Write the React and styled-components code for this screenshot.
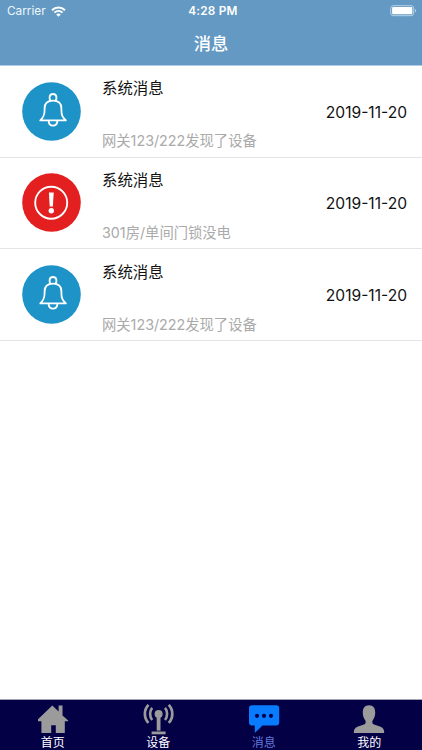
import React, { useState } from "react";
import styled, { createGlobalStyle } from "styled-components";

const GlobalStyle = createGlobalStyle`
  * {
    box-sizing: border-box;
  }
  body {
    margin: 0;
    background: #ffffff;
    font-family: Inter, "Noto Sans CJK SC", sans-serif;
  }
`;

const Screen = styled.div`
  display: flex;
  flex-direction: column;
  height: 100vh;
  overflow: hidden;
`;

const Header = styled.header`
  flex: none;
  height: 66px;
  background: #6399c2;
  border-bottom: 1px solid #aecdea;
  color: #ffffff;
`;

const StatusBar = styled.div`
  display: grid;
  grid-template-columns: 1fr auto 1fr;
  align-items: center;
  height: 22px;
  padding: 0 5px 0 7px;
  font-size: 11.8px;
  line-height: 22px;
`;

const Carrier = styled.div`
  display: flex;
  align-items: center;
  gap: 5px;
  color: #eef6fc;
`;

const Clock = styled.div`
  padding-left: 2px;
  font-weight: 600;
  letter-spacing: 0.2px;
`;

const Battery = styled.svg`
  justify-self: end;
`;

const HeaderTitle = styled.h1`
  margin: 0;
  height: 43px;
  line-height: 43px;
  text-align: center;
  font-size: 17.3px;
  font-weight: 500;
`;

const MessageList = styled.main`
  flex: 1;
  background: #ffffff;
`;

const MessageRow = styled.div`
  display: flex;
  align-items: center;
  height: 91.67px;
  padding: 0 15px 0 22px;
  border-bottom: 1px solid #e4e4e4;
`;

const MessageIcon = styled.svg`
  flex: none;
  width: 59px;
  height: 59px;
  margin-right: 21px;
`;

const MessageBody = styled.div`
  flex: 1;
  display: flex;
  flex-direction: column;
  justify-content: space-between;
  height: 82px;
  padding-top: 8px;
  white-space: nowrap;
`;

const MessageTitle = styled.p`
  margin: 0;
  font-size: 15.4px;
  line-height: 22px;
  color: #111111;
`;

const MessageDescription = styled.p`
  margin: 0;
  font-size: 14.3px;
  line-height: 22px;
  color: #aaaaaa;
`;

const MessageDate = styled.span`
  padding-top: 2px;
  font-size: 15.6px;
  color: #111111;
`;

const TabBar = styled.nav`
  flex: none;
  display: grid;
  grid-template-columns: repeat(4, 1fr);
  height: 51px;
  border-top: 1px solid #a3a3b2;
  background: #040046;
`;

const Tab = styled.button`
  display: flex;
  flex-direction: column;
  align-items: center;
  padding: 4px 0 0;
  border: none;
  background: none;
  font-family: inherit;
  font-size: 12px;
  line-height: 15px;
  color: ${(props) => (props.$active ? "#6478d8" : "#ffffff")};
`;

const TabIcon = styled.svg`
  width: 32px;
  height: 31px;
  color: ${(props) => (props.$active ? "#087bff" : "#9b9b9b")};
`;

const BellIcon = () => (
  <MessageIcon viewBox="0 0 59 59" fill="none" stroke="#ffffff">
    <circle cx="29.5" cy="29.5" r="29.3" fill="#1d93c8" stroke="none" />
    <g strokeWidth="1.8" strokeLinejoin="round" strokeLinecap="round">
      <path d="M28.4 18.4C27 16.6 27 12 31 12C35 12 35 16.6 33.6 18.4" />
      <path d="M18.3 38.4C21.6 35.2 22.6 33.2 22.6 28V26.4C22.6 21.2 26 18.7 31 18.7C36 18.7 39.4 21.2 39.4 26.4V28C39.4 33.2 40.4 35.2 43.9 38.4Z" />
      <path d="M26.6 39.2C27.2 45.2 34.8 45.2 35.4 39.2" />
    </g>
  </MessageIcon>
);

const AlertIcon = () => (
  <MessageIcon viewBox="0 0 59 59">
    <circle cx="29.5" cy="29.5" r="29.3" fill="#e31f1f" />
    <circle
      cx="29.2"
      cy="29.7"
      r="16"
      fill="none"
      stroke="#ffffff"
      strokeWidth="1.9"
    />
    <path d="M26.9 19.5H31.7L30.9 33.6H27.7Z" fill="#ffffff" />
    <circle cx="29.3" cy="37.7" r="2.7" fill="#ffffff" />
  </MessageIcon>
);

const WifiIcon = () => (
  <svg width="15" height="11" viewBox="0 0 15 11" fill="none" stroke="#ffffff">
    <path d="M1 4.2C4.7 0.5 10.3 0.5 14 4.2" strokeWidth="2" />
    <path d="M3.4 6.6C5.8 4.3 9.2 4.3 11.6 6.6" strokeWidth="1.9" />
    <path
      d="M5.2 8.4C6.5 7.2 8.5 7.2 9.8 8.4L7.5 10.7Z"
      fill="#ffffff"
      stroke="none"
    />
  </svg>
);

const HomeIcon = () => (
  <path
    fill="currentColor"
    d="M1 15.3L15.3 1.6L21.6 7.6V1.6H25.5V11.4L31.2 16.6V17.2H27.8V29H18.8V21.2H14.2V29H4.4V17.2H1Z"
  />
);

const DeviceIcon = () => (
  <g fill="none" stroke="currentColor">
    <circle cx="16.6" cy="9.9" r="4" fill="currentColor" stroke="none" />
    <path d="M16.6 11V26.6" strokeWidth="3.8" />
    <path d="M9.6 28.9H23.6" strokeWidth="2.8" />
    <path
      d="M10.2 3.8C7.4 7 7.4 12.6 10.2 16M23 3.8C25.8 7 25.8 12.6 23 16"
      strokeWidth="2.6"
    />
    <path
      d="M6.5 0.9C1.7 5.8 1.7 14 6.5 18.9M26.7 0.9C31.5 5.8 31.5 14 26.7 18.9"
      strokeWidth="2.7"
    />
  </g>
);

const MessageTabIcon = () => (
  <g>
    <path
      fill="currentColor"
      d="M4 1.2H28.2Q31.2 1.2 31.2 4.2V18.6Q31.2 21.6 28.2 21.6H14.5L6.8 29V21.6H4Q1 21.6 1 18.6V4.2Q1 1.2 4 1.2Z"
    />
    <g fill="#040046">
      <circle cx="9" cy="11.8" r="2.1" />
      <circle cx="16" cy="11.8" r="2.1" />
      <circle cx="23" cy="11.8" r="2.1" />
    </g>
  </g>
);

const ProfileIcon = () => (
  <path
    fill="currentColor"
    d="M16 1.2C20.4 1.2 22.2 4.2 22.2 8.5C22.2 11.7 21.4 14.2 19.8 16.2C19 17.3 19.1 19.4 20.4 20.2L27.6 22.8C30.2 23.8 31.2 25.6 31.2 29H.8C.8 25.6 1.8 23.8 4.4 22.8L11.6 20.2C12.9 19.4 13 17.3 12.2 16.2C10.6 14.2 9.8 11.7 9.8 8.5C9.8 4.2 11.6 1.2 16 1.2Z"
  />
);

const messages = [
  { id: 1, type: "bell", text: "网关123/222发现了设备", date: "2019-11-20" },
  { id: 2, type: "alert", text: "301房/单间门锁没电", date: "2019-11-20" },
  { id: 3, type: "bell", text: "网关123/222发现了设备", date: "2019-11-20" }
];

const tabs = [
  { name: "首页", Icon: HomeIcon },
  { name: "设备", Icon: DeviceIcon },
  { name: "消息", Icon: MessageTabIcon },
  { name: "我的", Icon: ProfileIcon }
];

export default () => {
  const [current, setCurrent] = useState("消息");

  return (
    <Screen>
      <GlobalStyle />
      <Header>
        <StatusBar>
          <Carrier>
            Carrier
            <WifiIcon />
          </Carrier>
          <Clock>4:28 PM</Clock>
          <Battery width="27" height="12" viewBox="0 0 27 12">
            <rect
              x="0.7"
              y="0.7"
              width="23"
              height="10"
              rx="2.6"
              fill="none"
              stroke="#b5d3ea"
              strokeWidth="1"
            />
            <rect x="2.1" y="2.1" width="20.2" height="7.2" rx="1" fill="#ffffff" />
            <path d="M25 4.1C26.6 4.6 26.6 7 25 7.5Z" fill="#b5d3ea" />
          </Battery>
        </StatusBar>
        <HeaderTitle>消息</HeaderTitle>
      </Header>
      <MessageList>
        {messages.map((message) => (
          <MessageRow key={message.id}>
            {message.type === "alert" ? <AlertIcon /> : <BellIcon />}
            <MessageBody>
              <MessageTitle>系统消息</MessageTitle>
              <MessageDescription>{message.text}</MessageDescription>
            </MessageBody>
            <MessageDate>{message.date}</MessageDate>
          </MessageRow>
        ))}
      </MessageList>
      <TabBar>
        {tabs.map(({ name, Icon }) => (
          <Tab
            key={name}
            $active={current === name}
            onClick={() => setCurrent(name)}
          >
            <TabIcon viewBox="0 0 32 31" $active={current === name}>
              <Icon />
            </TabIcon>
            {name}
          </Tab>
        ))}
      </TabBar>
    </Screen>
  );
};
